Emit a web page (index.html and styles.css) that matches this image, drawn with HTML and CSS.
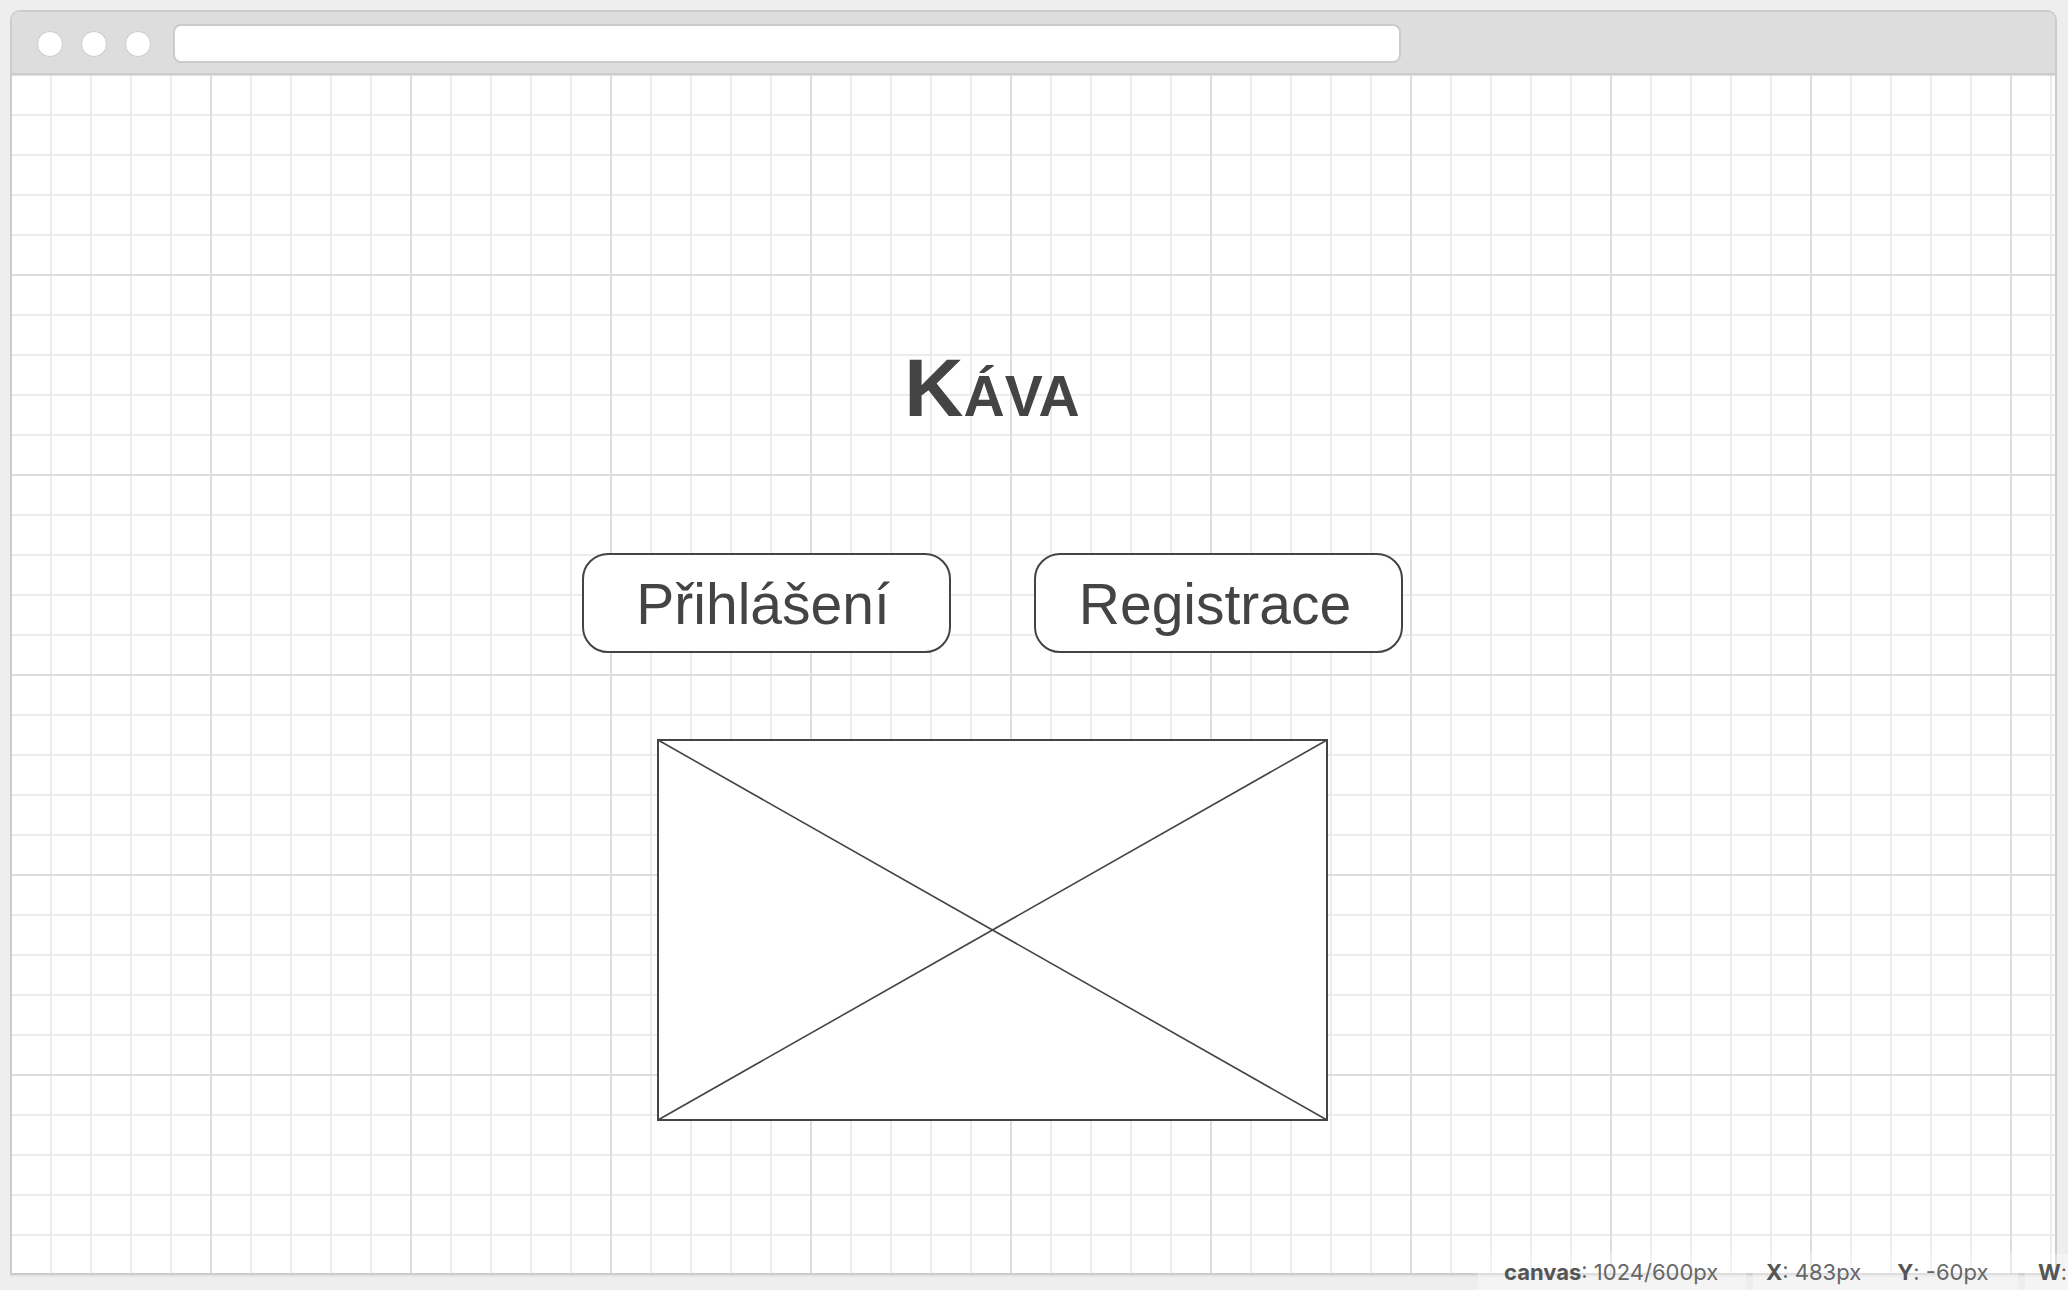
FILE: index.html
```html
<!DOCTYPE html>
<html lang="cs">
<head>
<meta charset="utf-8">
<title>Káva</title>
<link rel="stylesheet" href="styles.css">
</head>
<body>
<div class="window">
  <div class="chrome">
    <span class="dot"></span>
    <span class="dot"></span>
    <span class="dot"></span>
    <div class="url"></div>
  </div>
  <div class="canvas">
    <div class="stage">
      <h1 class="title">Káva</h1>
      <div class="actions">
        <button class="btn">Přihlášení</button>
        <button class="btn">Registrace</button>
      </div>
      <div class="placeholder">
        <svg class="ph-svg" width="671" height="382" viewBox="0 0 671 382">
          <rect x="1" y="1" width="669" height="380" fill="#fff" stroke="#444" stroke-width="2"/>
          <line x1="1" y1="1" x2="670" y2="381" stroke="#444" stroke-width="1.6"/>
          <line x1="670" y1="1" x2="1" y2="381" stroke="#444" stroke-width="1.6"/>
        </svg>
      </div>
    </div>
  </div>
</div>
<div class="statusbar">
  <div class="seg seg-canvas"><b>canvas</b>: 1024/600px</div>
  <div class="seg seg-pos"><span class="item"><b>X</b>: 483px</span><span class="item item-y"><b>Y</b>: -60px</span></div>
  <div class="seg seg-w"><b>W</b>:</div>
</div>
</body>
</html>
```
FILE: styles.css
```css
html, body {
  margin: 0;
  height: 100%;
}

body {
  background: #eeeeee;
  font-family: "Liberation Sans", Arial, sans-serif;
  overflow: hidden;
  position: relative;
}

.window {
  box-sizing: border-box;
  margin: 10px 0 0 10px;
  width: 2047px;
  height: 1265px;
  border: 2px solid #cccccc;
  border-radius: 10px 10px 0 0;
  background: #ffffff;
  display: flex;
  flex-direction: column;
  overflow: hidden;
  box-shadow: 0 2px 0 rgba(0, 0, 0, 0.04);
}

.chrome {
  box-sizing: border-box;
  flex: none;
  height: 63px;
  background: #dddddd;
  border-bottom: 2px solid #cccccc;
  display: flex;
  align-items: center;
  padding: 2px 0 0 25px;
  gap: 18px;
}

.dot {
  box-sizing: border-box;
  width: 26px;
  height: 26px;
  border-radius: 50%;
  background: #ffffff;
  border: 1.5px solid #cccccc;
}

.url {
  box-sizing: border-box;
  margin-left: 4px;
  width: 1228px;
  height: 39px;
  background: #ffffff;
  border: 2px solid #cccccc;
  border-radius: 8px;
}

.canvas {
  flex: 1;
  overflow: hidden;
  background-color: #ffffff;
  background-image:
    linear-gradient(to right, #dedede 0, #dedede 2px, transparent 2px),
    linear-gradient(to bottom, #dedede 0, #dedede 2px, transparent 2px),
    linear-gradient(to right, #ececec 0, #ececec 2px, transparent 2px),
    linear-gradient(to bottom, #ececec 0, #ececec 2px, transparent 2px);
  background-size: 200px 100%, 100% 200px, 40px 100%, 100% 40px;
  background-position: -2px 0, 0 -1px, -2px 0, 0 -1px;
}

.stage {
  width: 822px;
  margin-left: 569px;
  padding-top: 272px;
  display: flex;
  flex-direction: column;
  align-items: center;
}

.title {
  margin: 0;
  height: 82px;
  font-family: "Liberation Sans", Arial, sans-serif;
  font-size: 82px;
  line-height: 82px;
  font-weight: bold;
  font-variant: small-caps;
  color: #444444;
}

.actions {
  display: flex;
  gap: 83px;
  margin-top: 124px;
}

.btn {
  box-sizing: border-box;
  width: 369px;
  height: 100px;
  padding: 3px 6px 0 0;
  border: 2px solid #444444;
  border-radius: 26px;
  background: #ffffff;
  color: #444444;
  font-family: "Liberation Sans", Arial, sans-serif;
  font-size: 57px;
  line-height: 1;
}

.placeholder {
  margin-top: 86px;
  width: 671px;
  height: 382px;
}

.ph-svg {
  display: block;
}

.statusbar {
  position: absolute;
  left: 1478px;
  top: 1254px;
  display: flex;
  gap: 7px;
  height: 36px;
  font-family: Inter, "Liberation Sans", sans-serif;
  font-size: 22px;
  line-height: 36px;
  color: #666666;
  white-space: nowrap;
}

.statusbar b {
  color: #555555;
  font-weight: bold;
}

.seg {
  height: 36px;
  background: rgba(255, 255, 255, 0.35);
}

.seg-canvas {
  width: 268px;
  box-sizing: border-box;
  padding-left: 26px;
}

.seg-pos {
  width: 265px;
  box-sizing: border-box;
  padding-left: 13px;
}

.item-y {
  margin-left: 36px;
}

.seg-w {
  width: 60px;
  box-sizing: border-box;
  padding-left: 13px;
}
```
